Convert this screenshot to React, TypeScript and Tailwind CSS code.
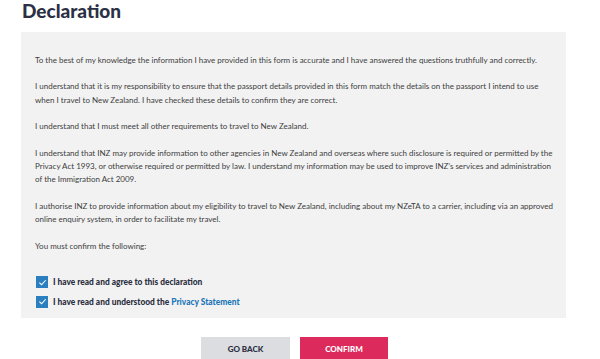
import React from 'react';

const paragraphs = [
  'To the best of my knowledge the information I have provided in this form is accurate and I have answered the questions truthfully and correctly.',
  'I understand that it is my responsibility to ensure that the passport details provided in this form match the details on the passport I intend to use when I travel to New Zealand. I have checked these details to confirm they are correct.',
  'I understand that I must meet all other requirements to travel to New Zealand.',
  'I understand that INZ may provide information to other agencies in New Zealand and overseas where such disclosure is required or permitted by the Privacy Act 1993, or otherwise required or permitted by law. I understand my information may be used to improve INZ\u2019s services and administration of the Immigration Act 2009.',
  'I authorise INZ to provide information about my eligibility to travel to New Zealand, including about my NZeTA to a carrier, including via an approved online enquiry system, in order to facilitate my travel.',
  'You must confirm the following:',
];

function Check({ children }: { children: React.ReactNode }) {
  return (
    <label className="flex items-center gap-[5px]">
      <span className="flex h-[12px] w-[12px] items-center justify-center bg-[#2a7fc1]">
        <svg width="9" height="9" viewBox="0 0 10 10" fill="none">
          <path d="M1.5 5.2 4 7.5 8.5 2.5" stroke="#fff" strokeWidth="1.2" />
        </svg>
      </span>
      <span className="text-[8.4px] font-black text-[#2b2f40]">{children}</span>
    </label>
  );
}

export default function App() {
  return (
    <div className="h-[359px] w-[600px] overflow-hidden bg-white font-['Lato',sans-serif]">
      <div className="ml-[21px] w-[545px]">
        <h1 className="pl-[1px] text-[19px] font-black leading-[22px] text-[#2b3044]">Declaration</h1>
        <div className="mt-[10px] h-[286px] bg-[#f2f2f2] pl-[14px] pr-[12px] pt-[22px]">
          <div className="flex flex-col gap-[13px] text-[8px] leading-[13.4px] text-[#3d3d3d]">
            {paragraphs.map((p) => (
              <p key={p}>{p}</p>
            ))}
          </div>
          <div className="mt-[23px] flex flex-col gap-[7px] pl-[1px]">
            <Check>I have read and agree to this declaration</Check>
            <Check>
              I have read and understood the <span className="text-[#1d76b8]">Privacy Statement</span>
            </Check>
          </div>
        </div>
        <div className="mt-[19px] flex gap-[10px] pl-[180px]">
          <button className="h-[24px] w-[89px] bg-[#dcdde0] text-[8px] font-black text-[#2b2f40]">GO BACK</button>
          <button className="h-[24px] w-[88px] bg-[#dc2a5c] text-[8px] font-black text-white">CONFIRM</button>
        </div>
      </div>
    </div>
  );
}
